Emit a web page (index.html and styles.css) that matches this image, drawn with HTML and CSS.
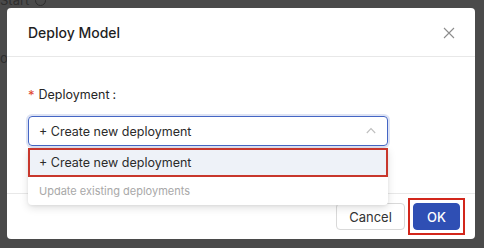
FILE: index.html
```html
<!DOCTYPE html>
<html>
<head>
<meta charset="utf-8">
<link rel="stylesheet" href="styles.css">
</head>
<body>
<div class="backdrop">
  <div class="bg-start">Start <span class="bg-circle"></span></div>
  <div class="bg-side">o6</div>
</div>
<div class="modal">
  <div class="modal-header">
    <div class="modal-title">Deploy Model</div>
    <svg class="close" width="12" height="12" viewBox="0 0 12 12"><path d="M1 1L11 11M11 1L1 11" stroke="#8c8c8c" stroke-width="1.1" fill="none"/></svg>
  </div>
  <div class="modal-body">
    <div class="label"><span class="req">*</span>Deployment<span class="colon">:</span></div>
    <div class="select-wrap">
      <div class="select">
        <span>+ Create new deployment</span>
        <svg class="chev" width="10" height="7" viewBox="0 0 10 7"><path d="M0.8 6L5 1.5L9.2 6" stroke="#bfbfbf" stroke-width="1.1" fill="none"/></svg>
      </div>
      <div class="dropdown">
        <div class="option active">+ Create new deployment</div>
        <div class="option disabled">Update existing deployments</div>
      </div>
    </div>
  </div>
  <div class="modal-footer">
    <button class="btn">Cancel</button>
    <span class="ok-mark"><button class="btn primary">OK</button></span>
  </div>
</div>
</body>
</html>
```
FILE: styles.css
```css
* { box-sizing: border-box; }
html, body { margin: 0; padding: 0; }
body {
  width: 484px;
  height: 248px;
  background: #4a4a4a;
  font-family: Inter, "Liberation Sans", sans-serif;
  padding: 8px 0 0 7px;
  overflow: hidden;
  position: relative;
}
.backdrop { position: absolute; left: 0; top: 0; width: 484px; height: 248px; }
.bg-start {
  position: absolute; left: 0; top: -8px;
  font-size: 13px; color: #2e2e2e;
  display: flex; align-items: center; gap: 6px;
}
.bg-circle { width: 11px; height: 11px; border: 1.2px solid #2e2e2e; border-radius: 50%; display: inline-block; }
.bg-side {
  position: absolute; left: 0; top: 50px;
  font-size: 13px; color: #2e2e2e;
}
.modal {
  position: relative;
  width: 468px;
  height: 231px;
  background: #fff;
  border-radius: 4px;
  display: flex;
  flex-direction: column;
}
.modal-header {
  height: 49px;
  padding: 0 20px 0 21px;
  border-bottom: 1px solid #e8e8e8;
  display: flex;
  align-items: center;
  justify-content: space-between;
}
.modal-title {
  font-size: 14px;
  font-weight: 500;
  color: #1f1f1f;
  margin-top: 1px;
}
.close { margin-top: 1px; }
.modal-body {
  flex: 1;
  padding: 29px 20px 0 21px;
}
.label {
  font-size: 12.5px;
  color: #262626;
  height: 18px;
  line-height: 18px;
  display: flex;
  align-items: center;
}
.req { color: #e0452c; margin-right: 4px; font-size: 13px; }
.colon { margin-left: 3px; }
.select-wrap { position: relative; margin-top: 12px; width: 360px; }
.select {
  height: 30px;
  border: 1px solid #4566c4;
  border-radius: 4px;
  box-shadow: 0 0 0 2px rgba(69, 102, 196, 0.18);
  padding: 0 11px 0 10px;
  display: flex;
  align-items: center;
  justify-content: space-between;
  font-size: 12.5px;
  color: #2b2b2b;
}
.chev { margin-top: -2px; }
.dropdown {
  position: absolute;
  left: 0;
  top: 32px;
  width: 360px;
  background: #fff;
  border-radius: 0 0 4px 4px;
  box-shadow: 0 3px 8px rgba(0, 0, 0, 0.12), 0 1px 3px rgba(0, 0, 0, 0.06);
  z-index: 2;
}
.option {
  height: 29px;
  padding: 0 11px;
  display: flex;
  align-items: center;
  font-size: 12.5px;
  color: #2b2b2b;
}
.option.active {
  background: #eef2f8;
  outline: 2px solid #c8372c;
  outline-offset: -2px;
}
.option.disabled {
  color: #a8a8a8;
  font-size: 11px;
  height: 28px;
}
.modal-footer {
  height: 46px;
  border-top: 1px solid #e8e8e8;
  padding: 0 10px 0 0;
  display: flex;
  align-items: center;
  justify-content: flex-end;
  gap: 3px;
}
.btn {
  height: 27px;
  border: 1px solid #d9d9d9;
  border-radius: 4px;
  background: #fff;
  font-family: inherit;
  font-size: 13px;
  color: #333;
  padding: 0;
  width: 69px;
  display: block;
}
.ok-mark {
  display: block;
  border: 2px solid #d2261b;
  padding: 3px;
}
.btn.primary {
  width: 47px;
  background: #2f4fb4;
  border-color: #2f4fb4;
  color: #fff;
  font-weight: 500;
}
```
